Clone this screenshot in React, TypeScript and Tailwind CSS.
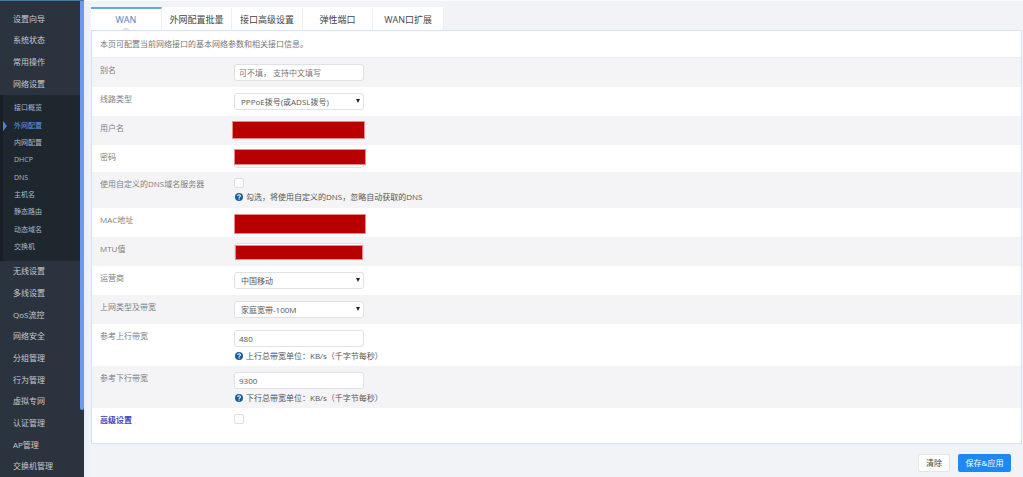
import React, { useState } from 'react';

interface FieldRowProps {
  label: string;
  htmlFor: string;
  children: React.ReactNode;
  className?: string;
  labelClass?: string;
}

const topMenu: string[] = ['设置向导', '系统状态', '常用操作', '网络设置'];

const subMenu: string[] = ['接口概览', '外网配置', '内网配置', 'DHCP', 'DNS', '主机名', '静态路由', '动态域名', '交换机'];

const bottomMenu: string[] = [
  '无线设置',
  '多线设置',
  'QoS流控',
  '网络安全',
  '分组管理',
  '行为管理',
  '虚拟专网',
  '认证管理',
  'AP管理',
  '交换机管理',
];

const tabs: string[] = ['WAN', '外网配置批量', '接口高级设置', '弹性端口', 'WAN口扩展'];

const inputClass =
  'block w-[130px] h-[17px] px-1 rounded-[3px] border border-[#dfe1e5] bg-white text-[8px] text-[#555] placeholder:text-[#777] outline-none';

const checkboxClass = 'block size-[10px] appearance-none rounded-[2px] border border-[#dcdee2] bg-white checked:bg-[#1e88f5]';

const redactedClass = 'absolute border border-[#e98a8a] bg-[#b90000]';

const MenuLink: React.FC<{ name: string }> = ({ name }) => (
  <a href="#" className="flex flex-1 items-center pl-[13px] text-[8px] leading-3 text-[#c3c8ce] hover:text-white">
    {name}
  </a>
);

const Sidebar: React.FC = () => {
  const [current, setCurrent] = useState<string>('外网配置');

  return (
    <aside className="relative flex w-[84px] shrink-0 flex-col border-t border-[#47799c] bg-[#2b343e] pt-[7px]">
      <nav className="flex flex-[4] flex-col">
        {topMenu.map((name) => (
          <MenuLink key={name} name={name} />
        ))}
      </nav>
      <nav className="flex h-[166px] flex-col border-l-[3px] border-[#191f25] bg-[#1f272e] py-[5px]">
        {subMenu.map((name) => (
          <a
            key={name}
            href="#"
            onClick={() => setCurrent(name)}
            className={`relative flex flex-1 items-center pl-[11px] text-[7px] leading-3 ${
              current === name ? 'text-[#5c9bee]' : 'text-[#a9b9cb]'
            }`}
          >
            {current === name && (
              <svg viewBox="0 0 4 10" className="absolute left-0 h-[10px] w-1" aria-hidden="true">
                <path d="M0 0L4 5L0 10Z" fill="#4488dd" />
              </svg>
            )}
            {name}
          </a>
        ))}
      </nav>
      <nav className="flex flex-[10] flex-col">
        {bottomMenu.map((name) => (
          <MenuLink key={name} name={name} />
        ))}
      </nav>
      {/* Scroll thumb */}
      <div className="absolute right-0 top-0 h-[86%] w-1 rounded-b-sm bg-[#699af0]" />
    </aside>
  );
};

const FieldRow: React.FC<FieldRowProps> = ({ label, htmlFor, children, className = 'pb-[6px]', labelClass = 'text-[#7c7f84]' }) => (
  <div className={`flex items-start pl-2 pt-[6px] odd:bg-[#f4f4f6] ${className}`}>
    <label htmlFor={htmlFor} className={`w-[134px] shrink-0 text-[8px] leading-3 ${labelClass}`}>
      {label}
    </label>
    <div className="relative">{children}</div>
  </div>
);

const Select: React.FC<{ id: string; options: string[] }> = ({ id, options }) => (
  <div className="relative">
    <select id={id} className={`${inputClass} appearance-none pl-[6px]`}>
      {options.map((option) => (
        <option key={option}>{option}</option>
      ))}
    </select>
    <svg viewBox="0 0 4 4" className="pointer-events-none absolute right-1 top-[6px] size-1" aria-hidden="true">
      <path d="M0 0H4L2 4Z" fill="#222" />
    </svg>
  </div>
);

const Hint: React.FC<{ children: React.ReactNode }> = ({ children }) => (
  <p className="mt-[3px] flex items-center gap-[3px] pl-px text-[8px] leading-3 text-[#555]">
    <svg viewBox="0 0 16 16" className="size-2 shrink-0" aria-hidden="true">
      <circle cx="8" cy="8" r="8" fill="#17609f" />
      <path d="M5.3 6C5.4 2.8 10.8 2.8 10.8 6C10.8 7.8 8.2 7.8 8.2 9.8" fill="none" stroke="#fff" strokeWidth="2.1" />
      <rect x="7.1" y="11" width="2.2" height="2.2" fill="#fff" />
    </svg>
    {children}
  </p>
);

const App: React.FC = () => {
  const [activeTab, setActiveTab] = useState<string>('WAN');

  return (
    <div className="flex min-h-screen bg-[#f3f4f6] font-['Open_Sans','Noto_Sans_CJK_SC',sans-serif]">
      <Sidebar />

      <main className="min-w-0 flex-1 border-t border-[#fafbfc] bg-linear-to-r from-[#e9effb] to-[#f2f3f6] to-[8px] pl-[7px] pr-px pt-[6px]">
        {/* Tabs */}
        <div className="grid w-[353px] grid-cols-5">
          {tabs.map((tab) => (
            <button
              key={tab}
              type="button"
              onClick={() => setActiveTab(tab)}
              className={`relative h-[23px] border-r border-t-2 border-r-[#eceef2] bg-white text-[9px] leading-4 ${
                activeTab === tab ? 'border-t-[#65a9dc] text-[#4e7bc4]' : 'border-t-white text-[#444]'
              }`}
            >
              {tab}
              {activeTab === tab && (
                <svg viewBox="0 0 8 3" className="absolute bottom-0 left-1/2 h-[3px] w-2 -translate-x-1/2" aria-hidden="true">
                  <path d="M0 3L4 0L8 3Z" fill="#dde1e7" />
                </svg>
              )}
            </button>
          ))}
        </div>

        {/* Settings form */}
        <form id="wan-form" className="border border-[#d3e3f5] bg-white">
          <p className="border-b border-[#e9edf5] py-[7px] pl-2 text-[8px] leading-3 text-[#777]">
            本页可配置当前网络接口的基本网络参数和相关接口信息。
          </p>
          <div>
            <FieldRow label="别名" htmlFor="alias">
              <input id="alias" type="text" placeholder="可不填， 支持中文填写" className={inputClass} />
            </FieldRow>
            <FieldRow label="线路类型" htmlFor="line-type">
              <Select id="line-type" options={['PPPoE拨号(或ADSL拨号)']} />
            </FieldRow>
            <FieldRow label="用户名" htmlFor="username">
              <input id="username" type="text" className={inputClass} />
              <div className={`${redactedClass} -left-[2px] -top-px h-[18px] w-[133px]`} />
            </FieldRow>
            <FieldRow label="密码" htmlFor="password" className="pb-1">
              <input id="password" type="password" className={inputClass} />
              <div className={`${redactedClass} -top-[2px] left-0 h-4 w-[132px]`} />
            </FieldRow>
            <FieldRow label="使用自定义的DNS域名服务器" htmlFor="custom-dns" className="pb-[5px]">
              <input id="custom-dns" type="checkbox" className={checkboxClass} />
              <Hint>勾选，将使用自定义的DNS，忽略自动获取的DNS</Hint>
            </FieldRow>
            <FieldRow label="MAC地址" htmlFor="mac">
              <input id="mac" type="text" className={inputClass} />
              <div className={`${redactedClass} left-0 top-0 h-5 w-[132px]`} />
            </FieldRow>
            <FieldRow label="MTU值" htmlFor="mtu">
              <input id="mtu" type="text" className={inputClass} />
              <div className={`${redactedClass} left-px top-[2px] h-[15px] w-[128px]`} />
            </FieldRow>
            <FieldRow label="运营商" htmlFor="isp">
              <Select id="isp" options={['中国移动', '中国电信', '中国联通']} />
            </FieldRow>
            <FieldRow label="上网类型及带宽" htmlFor="bandwidth">
              <Select id="bandwidth" options={['家庭宽带-100M']} />
            </FieldRow>
            <FieldRow label="参考上行带宽" htmlFor="upload" className="pb-1">
              <input id="upload" type="text" defaultValue="480" className={inputClass} />
              <Hint>上行总带宽单位：KB/s（千字节每秒）</Hint>
            </FieldRow>
            <FieldRow label="参考下行带宽" htmlFor="download" className="pb-1">
              <input id="download" type="text" defaultValue="9300" className={inputClass} />
              <Hint>下行总带宽单位：KB/s（千字节每秒）</Hint>
            </FieldRow>
            <FieldRow label="高级设置" htmlFor="advanced" className="pb-[17px]" labelClass="font-bold text-[#4a48b8]">
              <input id="advanced" type="checkbox" className={checkboxClass} />
            </FieldRow>
          </div>
        </form>

        {/* Form actions */}
        <div className="flex justify-end gap-2 pb-1 pr-[11px] pt-[10px]">
          <button
            type="reset"
            form="wan-form"
            className="h-[18px] w-8 rounded-[2px] border border-[#e3e5e8] bg-white text-[8px] leading-3 text-[#444]"
          >
            清除
          </button>
          <button type="button" className="h-[18px] w-[53px] rounded-[2px] bg-[#1e88f5] text-[8px] leading-3 text-white">
            保存&amp;应用
          </button>
        </div>
      </main>
    </div>
  );
};

export default App;
